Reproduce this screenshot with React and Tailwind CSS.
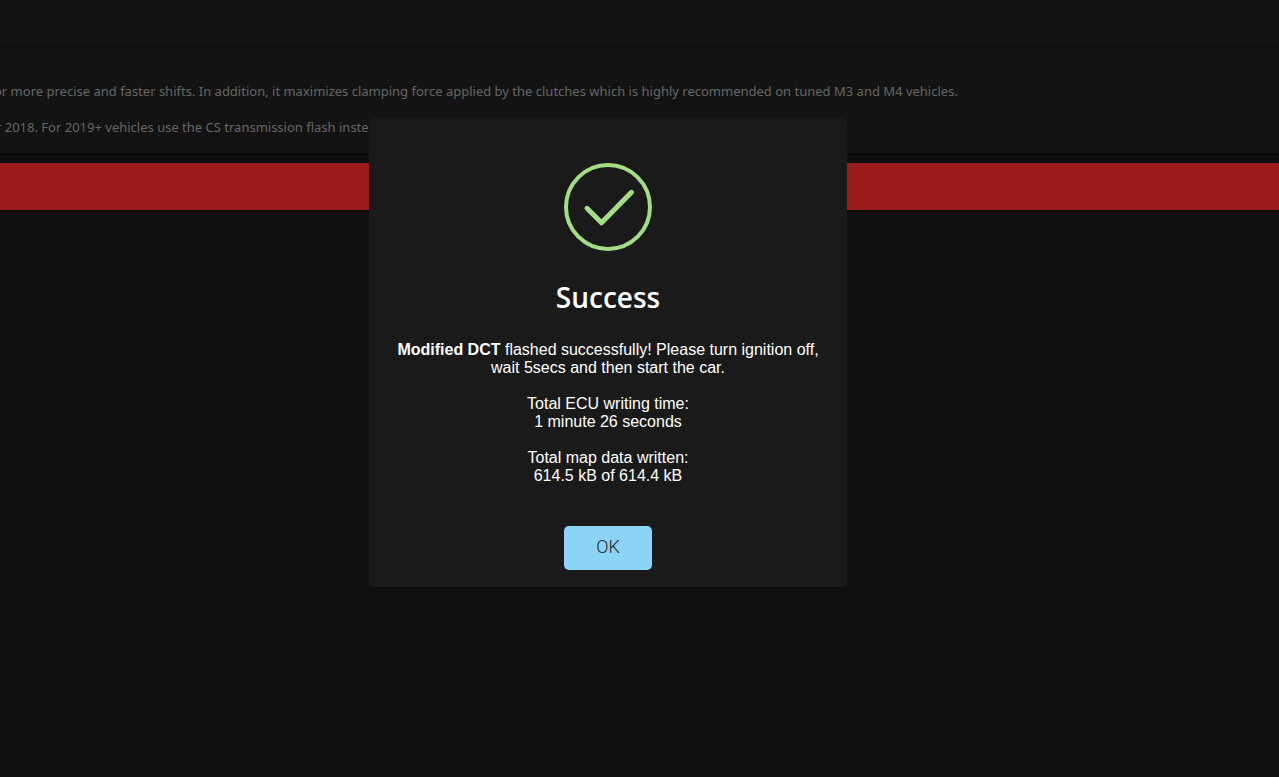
export default function App() {
  return (
    <div className="relative min-h-screen overflow-hidden bg-[#0f0f0f] font-['Noto_Sans','Open_Sans',sans-serif]">
      <header className="h-[45px] bg-[#131313]" />
      <main>
        <section className="mt-1 h-[104px] bg-[#131313] pt-[33px] text-[13px] leading-[18px] whitespace-nowrap text-[#666666] shadow-[0_2px_0_#0b0b0b]">
          <p className="-ml-1.5">or more precise and faster shifts. In addition, it maximizes clamping force applied by the clutches which is highly recommended on tuned M3 and M4 vehicles.</p>
          <p className="mt-[18px] -ml-1">r 2018. For 2019+ vehicles use the CS transmission flash instead.</p>
        </section>
        <div className="mt-[10px] h-[47px] bg-[#991b1b]" />
      </main>
      <div className="absolute inset-0 flex items-start justify-center pt-[118px] pr-[63px]">
        <div role="dialog" aria-modal="true" aria-labelledby="title" className="flex w-[478px] flex-col items-center rounded-[5px] bg-[#1a1a1a] px-5 pt-[45px] pb-[17px] text-center text-white">
          <svg viewBox="0 0 88 88" className="size-[88px]" fill="none" stroke="#a5dc86" aria-hidden="true">
            <circle cx="44" cy="44" r="42" strokeWidth="4" />
            <path d="M23 45.300L37.500 59.800L67.500 29.300" strokeWidth="5" strokeLinecap="round" strokeLinejoin="round" />
          </svg>
          <h1 id="title" className="mt-[26px] font-['Open_Sans',sans-serif] text-[28px] leading-10 font-semibold">Success</h1>
          <div className="mt-6 font-['Liberation_Sans',Arial,sans-serif] text-base leading-[18px]">
            <p><b>Modified DCT</b> flashed successfully! Please turn ignition off,<br />wait 5secs and then start the car.</p>
            <p className="mt-[18px]">Total ECU writing time:<br />1 minute 26 seconds</p>
            <p className="mt-[18px]">Total map data written:<br />614.5 kB of 614.4 kB</p>
          </div>
          <button className="mt-[41px] h-11 w-[88px] rounded-[5px] bg-[#8cd4f5] pb-0.5 font-['Roboto',sans-serif] text-lg font-light text-[#222222]">OK</button>
        </div>
      </div>
    </div>
  );
}
